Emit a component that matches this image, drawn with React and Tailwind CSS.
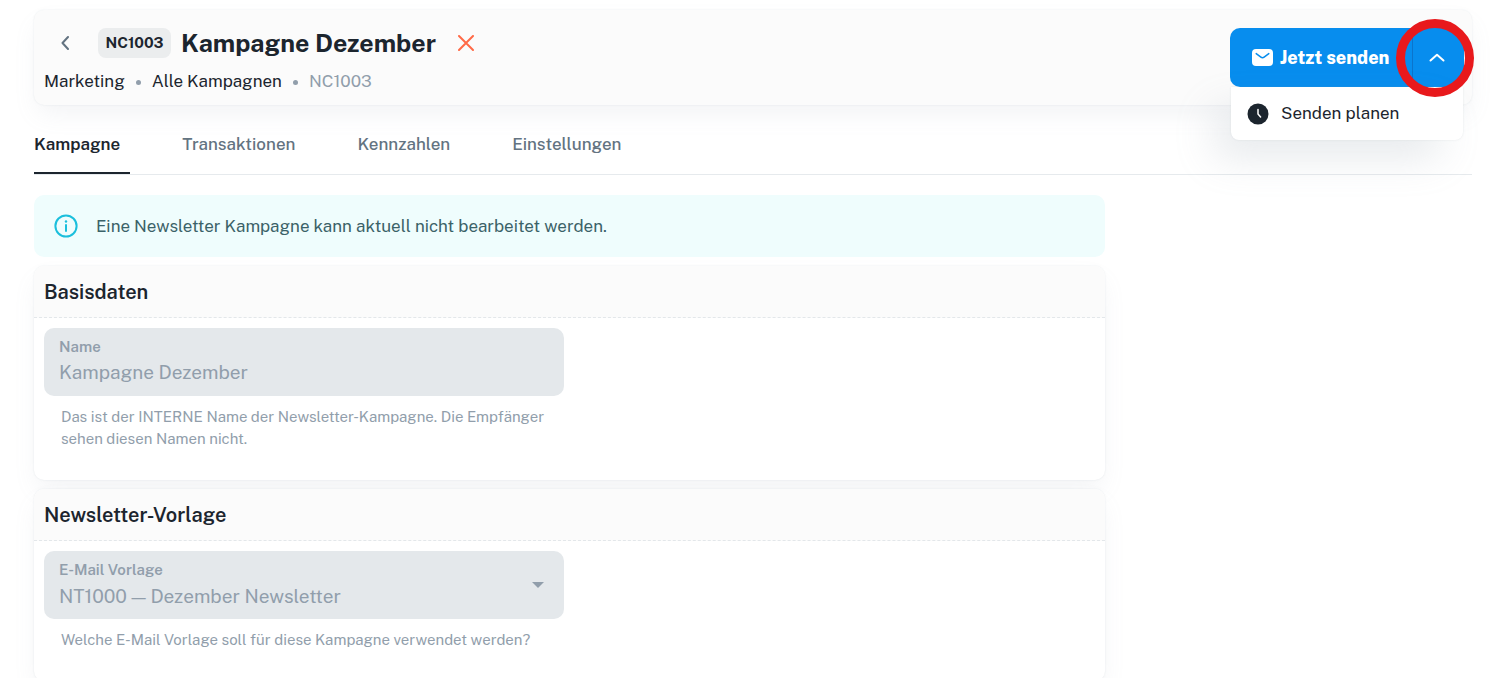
import React, { useState } from "react";

// ==========================================
// ICONS
// ==========================================
function MailIcon() {
  return (
    <svg viewBox="0 0 21 17" className="h-[17px] w-[21px] shrink-0" aria-hidden="true">
      <rect width="21" height="17" rx="4" fill="#fff" />
      <path d="M4.2 4.6 8.9 8.1a2.7 2.7 0 0 0 3.2 0l4.7-3.5" fill="none" stroke="#078dee" strokeWidth="1.5" strokeLinecap="round" />
    </svg>
  );
}

function ClockIcon() {
  return (
    <svg viewBox="0 0 22 22" className="size-[22px] shrink-0" aria-hidden="true">
      <circle cx="11" cy="11" r="10.5" fill="#1c252e" />
      <path d="M11 6.4V11l2.6 3" fill="none" stroke="#fff" strokeWidth="1.5" strokeLinecap="round" strokeLinejoin="round" />
    </svg>
  );
}

function InfoIcon() {
  return (
    <svg viewBox="0 0 24 24" className="size-6 shrink-0" aria-hidden="true">
      <circle cx="12" cy="12" r="10.6" fill="none" stroke="#1bbfdc" strokeWidth="2" />
      <circle cx="12" cy="7.5" r="1.2" fill="#1bbfdc" />
      <path d="M12 11v6" stroke="#1bbfdc" strokeWidth="2" strokeLinecap="round" />
    </svg>
  );
}

// ==========================================
// CARD: Titled section with a dashed divider
// ==========================================
function Card({ title, children }) {
  return (
    <section className="overflow-hidden rounded-[10px] bg-white shadow-[0_0_2px_rgba(145,158,171,0.2),0_12px_24px_-4px_rgba(145,158,171,0.12)]">
      <h2 className="flex h-[52px] items-center border-b border-dashed border-[#e3e7ea] bg-[#fbfbfb] px-2.5 text-xl font-semibold">
        {title}
      </h2>
      <div className="px-2.5 pt-2.5 pb-[30px]">{children}</div>
    </section>
  );
}

// Grey box that holds a small label above a disabled control
function Field({ id, label, help, children }) {
  return (
    <div className="w-full max-w-[520px]">
      <div className="relative h-[68px] rounded-[10px] bg-[#e4e8eb] px-[15px] pt-2 text-[#919eab]">
        <label htmlFor={id} className="block text-[15px] leading-[22px] font-semibold">
          {label}
        </label>
        {children}
      </div>
      <p id={`${id}-help`} className="mt-2.5 px-[17px] text-[15px] leading-[22px] text-[#919eab]">
        {help}
      </p>
    </div>
  );
}

const tabs = ["Kampagne", "Transaktionen", "Kennzahlen", "Einstellungen"];

export default function App() {
  const [activeTab, setActiveTab] = useState("Kampagne");
  const [menuOpen, setMenuOpen] = useState(true);

  return (
    <div className="h-screen overflow-hidden bg-white pt-2.5 pr-[30px] pl-[34px] font-['Public_Sans',Inter,sans-serif] text-[#1c252e]">
      {/* Page header */}
      <header className="flex items-start justify-between rounded-[10px] bg-[#fbfbfb] px-2.5 pt-[18px] pb-3 shadow-[0_0_2px_rgba(145,158,171,0.2),0_12px_24px_-4px_rgba(145,158,171,0.12)]">
        <div>
          <div className="flex h-[30px] items-center">
            <button type="button" aria-label="Zurück" className="flex h-[30px] w-[42px] items-center justify-center">
              <svg viewBox="0 0 8 14" className="h-3.5 w-2" aria-hidden="true">
                <path d="M7 1 1.5 7 7 13" fill="none" stroke="#637381" strokeWidth="2" strokeLinecap="round" strokeLinejoin="round" />
              </svg>
            </button>
            <span className="ml-3 flex h-[30px] w-[73px] items-center justify-center rounded-lg bg-[#ebedee] text-[15px] font-bold">NC1003</span>
            <h1 className="ml-2.5 text-[25px] leading-7 font-bold">Kampagne Dezember</h1>
            <button type="button" aria-label="Schließen" className="ml-[22px] flex size-4 items-center justify-center">
              <svg viewBox="0 0 16 16" className="size-4" aria-hidden="true">
                <path d="m1 1 14 14M15 1 1 15" fill="none" stroke="#ff6a47" strokeWidth="2" strokeLinecap="round" />
              </svg>
            </button>
          </div>
          <nav aria-label="Brotkrumen" className="mt-3 -mb-px flex h-6 items-center gap-[11px] text-[17px]">
            <a href="#marketing">Marketing</a>
            <span className="size-[5px] rounded-full bg-[#919eab]" />
            <a href="#kampagnen">Alle Kampagnen</a>
            <span className="size-[5px] rounded-full bg-[#919eab]" />
            <span className="text-[#919eab]">NC1003</span>
          </nav>
        </div>

        {/* Split button with its menu */}
        <div className="relative -mr-[2px] flex h-[59px]">
          <button type="button" className="flex w-[182px] items-center gap-[7px] rounded-l-[10px] bg-[#078dee] pl-[22px] text-lg font-extrabold whitespace-nowrap text-white">
            <MailIcon />
            Jetzt senden
          </button>
          <button
            type="button"
            aria-label="Weitere Optionen"
            aria-expanded={menuOpen}
            onClick={() => setMenuOpen(!menuOpen)}
            className="flex w-[52px] items-center justify-center rounded-r-[10px] border-l border-[#0b74cc] bg-[#078dee] pr-[3px]"
          >
            <svg viewBox="0 0 16 9" className="h-[9px] w-4" aria-hidden="true">
              <path d="M1.5 7.5 8 1.8l6.5 5.7" fill="none" stroke="#fff" strokeWidth="2" strokeLinecap="round" strokeLinejoin="round" />
            </svg>
          </button>
          {menuOpen && (
            <div className="absolute inset-x-px top-full rounded-b-lg bg-white shadow-[0_0_2px_rgba(145,158,171,0.24),-20px_20px_40px_-4px_rgba(145,158,171,0.24)]">
              <button type="button" className="flex h-[53px] w-full items-center gap-3 pl-4 text-[17px] whitespace-nowrap">
                <ClockIcon />
                Senden planen
              </button>
            </div>
          )}
          {/* Highlight ring around the menu toggle */}
          <span className="pointer-events-none absolute -top-[9px] -right-2.5 size-[78px] rounded-full border-[9px] border-[#e8191c]" />
        </div>
      </header>

      {/* Tabs */}
      <div role="tablist" className="mt-2.5 flex h-[60px] gap-[52px] border-b border-[#e6eaed] text-[17px] font-medium">
        {tabs.map((tab) => (
          <button
            key={tab}
            type="button"
            role="tab"
            aria-selected={activeTab === tab}
            onClick={() => setActiveTab(tab)}
            className={
              activeTab === tab
                ? "border-b-2 border-[#1c252e] pt-[3px] pr-2.5 font-semibold"
                : "border-b-2 border-transparent pt-[3px] pr-2.5 text-[#637381]"
            }
          >
            {tab}
          </button>
        ))}
      </div>

      {/* Content column */}
      <main className="mt-5 flex w-3/4 flex-col gap-[9px] pr-2">
        <div role="status" className="flex h-[62px] items-center gap-[18px] rounded-[10px] bg-[#effdfd] px-5 text-[17px] text-[#3b6268]">
          <InfoIcon />
          <p className="pt-0.5">Eine Newsletter Kampagne kann aktuell nicht bearbeitet werden.</p>
        </div>

        <Card title="Basisdaten">
          <Field id="name" label="Name" help="Das ist der INTERNE Name der Newsletter-Kampagne. Die Empfänger sehen diesen Namen nicht.">
            <input id="name" type="text" disabled defaultValue="Kampagne Dezember" aria-describedby="name-help" className="block h-7 w-full bg-transparent text-[19px]" />
          </Field>
        </Card>

        <Card title="Newsletter-Vorlage">
          <Field id="vorlage" label="E-Mail Vorlage" help="Welche E-Mail Vorlage soll für diese Kampagne verwendet werden?">
            <select id="vorlage" disabled aria-describedby="vorlage-help" className="block h-[30px] w-full appearance-none bg-transparent text-[19px] opacity-100">
              <option>NT1000 — Dezember Newsletter</option>
            </select>
            <svg viewBox="0 0 12 6" className="pointer-events-none absolute top-[31px] right-5 h-1.5 w-3" aria-hidden="true">
              <path d="M0 0h12L6 6z" fill="#919eab" />
            </svg>
          </Field>
        </Card>
      </main>
    </div>
  );
}
